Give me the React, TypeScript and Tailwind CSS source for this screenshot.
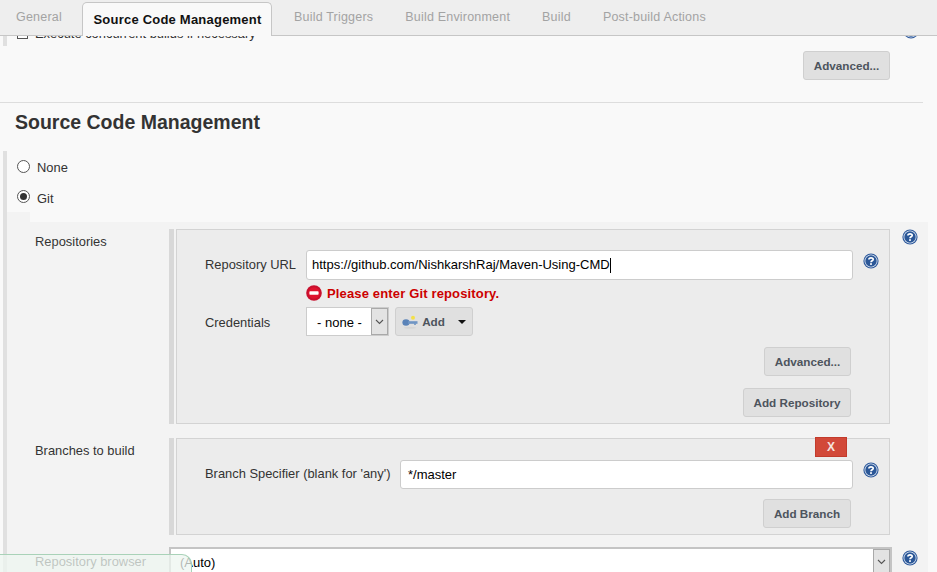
import React from 'react';

const HelpIcon = () => (
  <svg width="16" height="16" viewBox="0 0 16 16" className="shrink-0">
    <circle cx="8" cy="8" r="7.6" fill="#2f5a9c" />
    <circle cx="8" cy="8" r="6.5" fill="#dfe8f4" />
    <circle cx="8" cy="8" r="5.7" fill="#2b5797" />
    <path d="M5.9 6.4C5.9 4.3 10.2 4.2 10.2 6.4C10.2 7.8 8 7.8 8 9.2" fill="none" stroke="#fff" strokeWidth="1.7" />
    <rect x="7.1" y="10.2" width="1.8" height="1.7" fill="#fff" />
  </svg>
);

const ErrorIcon = () => (
  <svg width="16" height="16" viewBox="0 0 16 16" className="shrink-0">
    <circle cx="8" cy="8" r="7.8" fill="#c8102e" />
    <circle cx="8" cy="8" r="5.8" fill="#e0142f" />
    <rect x="3.4" y="6.3" width="9.2" height="3.4" rx="0.8" fill="#fff" />
  </svg>
);

const KeyIcon = () => (
  <svg width="16" height="14" viewBox="0 0 16 14" className="shrink-0">
    <ellipse cx="8" cy="12.8" rx="6" ry="1" fill="#d5d5d5" />
    <ellipse cx="4" cy="7.5" rx="3.6" ry="3.2" fill="#5a83b8" />
    <rect x="6" y="6.2" width="9.5" height="2.6" fill="#6f95c4" />
    <rect x="12" y="8.4" width="2" height="1.4" fill="#6f95c4" />
    <circle cx="11" cy="2.8" r="2" fill="#f3e04a" />
  </svg>
);

const ChevronBox = ({ className }: { className: string }) => (
  <div className={`flex items-center justify-center bg-[#e3e3e3] border border-[#a9a9a9] ${className}`}>
    <svg width="9" height="6" viewBox="0 0 9 6">
      <path d="M1 1l3.5 3.5L8 1" fill="none" stroke="#555" strokeWidth="1.1" />
    </svg>
  </div>
);

const Btn = ({ children, className = '' }: { children: React.ReactNode; className?: string }) => (
  <div className={`h-[29px] flex items-center justify-center bg-[#e0e0e0] border border-[#cfcfcf] rounded-[3px] text-[11.7px] font-bold text-[#4d545d] ${className}`}>
    {children}
  </div>
);

const Repeated = ({ height, children }: { height: string; children: React.ReactNode }) => (
  <div className={`relative flex gap-[2px] w-[721px] ${height}`}>
    <div className="w-[5px] bg-[#d8d8d8]" />
    <div className="flex-1 bg-[#ececec] border border-[#d3d3d3] pl-[28px]">{children}</div>
  </div>
);

const tabs = ['Build Triggers', 'Build Environment', 'Build', 'Post-build Actions'];

export default function App() {
  return (
    <div className="relative w-[937px] h-[572px] overflow-hidden bg-[#f9f9f9] text-[12.9px] text-[#333] font-['Liberation_Sans',Arial,sans-serif]">
      {/* Tab bar */}
      <div className="flex items-end h-[36px] bg-[#eeeeee] border-b border-[#c6c6c6] pl-[16px] text-[12.5px] text-[#a3a3a3] tracking-[0.2px]">
        <div className="h-full flex items-center w-[66px]">General</div>
        <div className="relative top-[1px] flex items-center justify-center h-[34px] w-[190px] pl-[1px] bg-[#f9f9f9] border border-b-0 border-[#c6c6c6] rounded-t-[5px] text-[13px] font-bold text-[#111] tracking-[0.22px]">
          Source Code Management
        </div>
        <div className="h-full flex items-center pl-[22px] gap-[32px]">
          {tabs.map((t) => (
            <span key={t}>{t}</span>
          ))}
        </div>
      </div>

      {/* Clipped end of the previous section */}
      <div className="flex h-[10px] overflow-hidden">
        <div className="ml-[3px] w-[4px] bg-[#e0e0e0]" />
        <div className="relative -top-[12px] flex items-start pl-[10px] w-[896px]">
          <div className="w-[11px] h-[13px] mt-[2px] border border-[#555] bg-white" />
          <span className="ml-[7px]">Execute concurrent builds if necessary</span>
        </div>
        <div className="relative -top-[13px]">
          <HelpIcon />
        </div>
      </div>

      <div className="flex justify-end pt-[5px] pr-[47px]">
        <Btn className="w-[87px]">Advanced...</Btn>
      </div>

      <div className="mt-[22px] w-[923px] border-t border-[#dddddd]" />

      <h2 className="flex items-center h-[48px] pl-[15px] pb-[9px] text-[19.5px] font-bold text-[#333]">
        Source Code Management
      </h2>

      {/* Section body */}
      <div className="ml-[3px] border-l-4 border-[#e0e0e0]">
        <div className="flex items-center h-[30px] pl-[10px] gap-[7px]">
          <div className="w-[13px] h-[13px] rounded-full border border-[#555] bg-white" />
          <span className="pt-[3px]">None</span>
        </div>
        <div className="flex items-center h-[31px] pl-[10px] gap-[7px]">
          <div className="flex items-center justify-center w-[13px] h-[13px] rounded-full border border-[#555] bg-white">
            <div className="w-[7px] h-[7px] rounded-full bg-[#333]" />
          </div>
          <span className="pt-[5px]">Git</span>
        </div>

        <div className="h-[10px] w-[23px] bg-[#f3f3f3]" />
        <div className="w-[921px] bg-[#f3f3f3] h-[360px] pt-[7px]">
          {/* Repositories */}
          <div className="flex">
            <div className="w-[162px] pl-[28px] pt-[3px]">Repositories</div>
            <Repeated height="h-[195px]">
              <div className="flex items-center mt-[20px]">
                <div className="w-[101px]">Repository URL</div>
                <div className="flex items-center w-[547px] h-[30px] bg-white border border-[#cccccc] rounded-[3px] pl-[5px] text-[13px] text-black">
                  https://github.com/NishkarshRaj/Maven-Using-CMD
                  <span className="w-px h-[15px] bg-black" />
                </div>
                <div className="ml-[10px] -mt-[9px]">
                  <HelpIcon />
                </div>
              </div>
              <div className="flex items-center ml-[101px] mt-[5px] h-[16px] gap-[5px] text-[13px] font-bold text-[#cc0000] tracking-[0.15px]">
                <ErrorIcon />
                <span className="pt-[1px]">Please enter Git repository.</span>
              </div>
              <div className="flex items-center mt-[6px]">
                <div className="w-[101px] pt-[2px]">Credentials</div>
                <div className="flex w-[83px] h-[29px] bg-white border border-[#cccccc]">
                  <div className="flex-1 flex items-center pl-[10px] pt-[3px] text-[13px] text-black">- none -</div>
                  <ChevronBox className="w-[17px]" />
                </div>
                <Btn className="ml-[6px] w-[78px] gap-[4px]">
                  <KeyIcon />
                  <span>Add</span>
                  <span className="ml-[9px] border-x-[4px] border-t-[4px] border-x-transparent border-t-[#111]" />
                </Btn>
              </div>
              <div className="flex justify-end pr-[38px] mt-[11px]">
                <Btn className="w-[87px]">Advanced...</Btn>
              </div>
              <div className="flex justify-end pr-[38px] mt-[12px]">
                <Btn className="w-[108px]">Add Repository</Btn>
              </div>
            </Repeated>
            <div className="ml-[12px]">
              <HelpIcon />
            </div>
          </div>

          {/* Branches */}
          <div className="flex mt-[14px]">
            <div className="w-[162px] pl-[28px] pt-[3px]">Branches to build</div>
            <Repeated height="h-[97px]">
              <div className="absolute top-[-1px] left-[646px] flex items-center justify-center w-[32px] h-[20px] bg-[#d24939] border border-[#c23b2c] text-[12px] font-bold text-[#f6e3df]">
                X
              </div>
              <div className="flex items-center mt-[21px]">
                <div className="w-[195px] pb-[2px]">Branch Specifier (blank for 'any')</div>
                <div className="flex items-center w-[453px] h-[29px] bg-white border border-[#cccccc] rounded-[3px] pl-[7px] text-[13px] text-black">
                  */master
                </div>
                <div className="ml-[10px] -mt-[9px]">
                  <HelpIcon />
                </div>
              </div>
              <div className="flex justify-end pr-[38px] mt-[10px]">
                <Btn className="w-[88px]">Add Branch</Btn>
              </div>
            </Repeated>
          </div>

          {/* Repository browser */}
          <div className="flex mt-[12px]">
            <div className="w-[162px] pl-[28px] pt-[5px]">Repository browser</div>
            <div className="flex w-[723px] h-[30px] bg-white border-2 border-[#c4c4c4]">
              <div className="flex-1 pl-[9px] pt-[4px] text-[13px] text-black">(Auto)</div>
              <ChevronBox className="w-[17px]" />
            </div>
            <div className="ml-[10px] mt-[3px]">
              <HelpIcon />
            </div>
          </div>
        </div>
      </div>

      {/* Floating notification strip */}
      <div className="absolute left-0 bottom-0 w-[192px] h-[18px] bg-[#eef6f0]/75 border-t border-r border-[#a9d2b8] rounded-tr-[10px]" />
    </div>
  );
}
